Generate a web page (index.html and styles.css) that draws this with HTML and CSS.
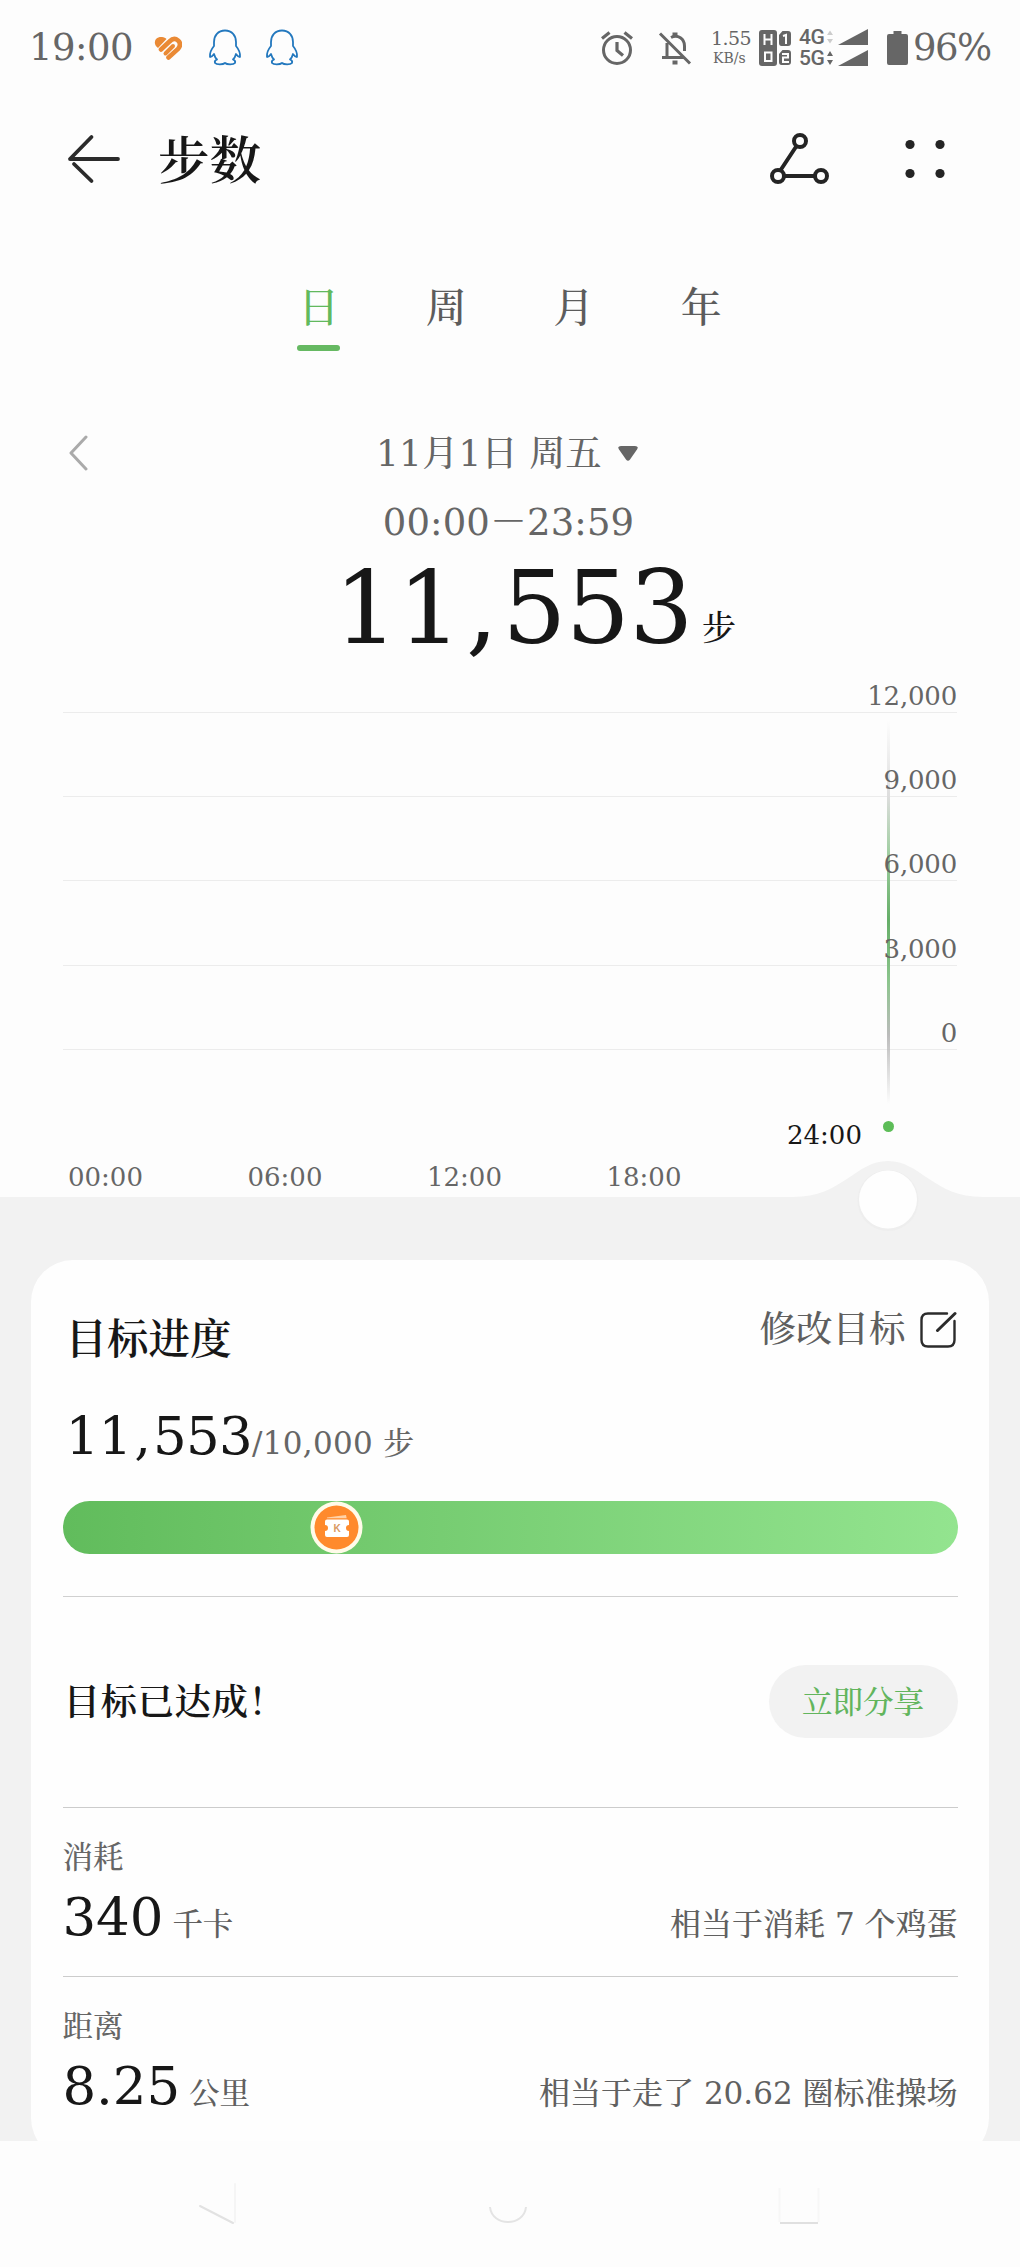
FILE: index.html
```html
<!DOCTYPE html>
<html lang="zh-CN">
<head>
<meta charset="utf-8">
<title>步数</title>
<link rel="stylesheet" href="styles.css">
</head>
<body>
<svg class="defs" width="0" height="0" aria-hidden="true">
  <symbol id="penguin" viewBox="0 0 34 38">
    <path d="M17 1.500C10 1.500 6 6.500 6 13v4C3.500 20 1.500 24 2 28c1.500 0 3-1.500 4-3 .5 2 1.500 4 3 5.500-2 .7-2.500 2-2 3.500 1.500 1.800 8 1.800 10 0 2 1.800 8.500 1.800 10 0 .5-1.500 0-2.800-2-3.500 1.500-1.500 2.500-3.500 3-5.500 1 1.500 2.500 3 4 3 .5-4-1.500-8-4-11v-4c0-6.500-4-11.500-11-11.500z" fill="none" stroke="#2378be" stroke-width="1.800" stroke-linejoin="round"/>
  </symbol>
</svg>
<div class="screen">
  <header class="status">
    <span class="clock">19:00</span>
    <svg class="heart" width="28" height="25" viewBox="0 0 28 25">
      <path d="M1 8C0 3 4 .5 8 1c2 .2 3.500 1 4.500 2L4 12Q1.500 10.500 1 8z" fill="#ea8a35"/>
      <path d="M7 13.500 15.500 5.500Q20 1 24 4.500t0 8.500L14.500 21.500" fill="none" stroke="#ea8a35" stroke-width="4.600" stroke-linecap="round"/>
      <path d="M11.500 17.500 19 10" stroke="#ea8a35" stroke-width="4" stroke-linecap="round"/>
    </svg>
    <svg class="qq" width="34" height="38"><use href="#penguin"/></svg>
    <svg class="qq second" width="34" height="38"><use href="#penguin"/></svg>
    <div class="system">
      <svg width="34" height="36" viewBox="0 0 34 36" fill="none" stroke="#666" stroke-width="3">
        <circle cx="17" cy="20" r="13.500"/><path d="M17 12v8.500l6 5M2 8.500l7.500-6M32 8.500l-7.500-6" stroke-width="3.200"/>
      </svg>
      <svg class="bell" width="34" height="36" viewBox="0 0 34 36" fill="none" stroke="#666" stroke-width="3">
        <path d="M9 13v14M4 27.500h22M13 7.500C20 4 26.500 9 26.500 16v5M2 3.500l30 30"/>
        <path d="M14.500 4.500h5M14.500 32.500h5" stroke-width="4"/>
      </svg>
      <div class="speed"><span class="speed-num">1.55</span><span class="speed-unit">KB/s</span></div>
      <svg class="hd" width="33" height="36" viewBox="0 0 33 36">
        <rect width="18" height="36" rx="3" fill="#666"/>
        <path d="M23.500 1H29q3 0 3 3v9q0 3-3 3h-6.500q-2.500 0-2.500-3V5zM23.500 20H29q3 0 3 3v9q0 3-3 3h-6.500q-2.500 0-2.500-3v-8z" fill="#666"/>
        <path d="M5.500 4v11M12.500 4v11M5.500 9.500h7M6 22.500h6.500v8.500H6zM24 6l3-1v9M23 24h6v3.500h-5V32h6" fill="none" stroke="#fdfdfd" stroke-width="2"/>
      </svg>
      <div class="net"><span>4G</span><span>5G</span></div>
      <svg class="signal" width="44" height="38" viewBox="0 0 44 38">
        <path d="M5 1.500l3 4.500H2zM5 14.500l3-4.500H2z" fill="#ccc"/>
        <path d="M5 22l3 5H2zM5 36l3-5H2z" fill="#666"/>
        <path d="M43 0v16H13zM43 21v16H13z" fill="#666"/>
      </svg>
      <svg class="battery" width="21" height="34" viewBox="0 0 21 34"><path d="M6.500 0h8v3H19q2 0 2 2v27q0 2-2 2H2q-2 0-2-2V5q0-2 2-2h4.500z" fill="#666"/></svg>
      <span class="percent">96%</span>
    </div>
  </header>

  <div class="appbar">
    <svg width="54" height="52" viewBox="0 0 54 52" fill="none" stroke="#2b2b2b" stroke-width="3.800" stroke-linecap="round" stroke-linejoin="round"><path d="M51 26H3L24.500 4M7 31l17.500 17"/></svg>
    <h1>步数</h1>
    <div class="actions">
      <svg width="60" height="52" viewBox="0 0 60 52" fill="none" stroke="#242424" stroke-width="4">
        <path d="M11 38 27.500 13M14 43h32"/><circle cx="31" cy="8" r="6"/><circle cx="9" cy="43" r="6"/><circle cx="52" cy="43" r="6"/>
      </svg>
      <svg width="40" height="40" viewBox="0 0 40 40" fill="#242424"><circle cx="5" cy="5.500" r="4.600"/><circle cx="35" cy="5.500" r="4.600"/><circle cx="5" cy="34.500" r="4.600"/><circle cx="35" cy="34.500" r="4.600"/></svg>
    </div>
  </div>

  <nav class="tabs">
    <a class="tab active">日</a><a class="tab">周</a><a class="tab">月</a><a class="tab">年</a>
  </nav>

  <section class="summary">
    <div class="date-row">
      <svg class="prev" width="20" height="36" viewBox="0 0 20 36" fill="none" stroke="#aaa" stroke-width="3" stroke-linecap="round" stroke-linejoin="round"><path d="M17 2 2 18l15 16"/></svg>
      <span class="date">11月1日 周五</span>
      <svg class="caret" width="20" height="15" viewBox="0 0 20 15"><path d="M3 0h14q4 0 2 3.500l-7 10q-2 2.500-4 0L1 3.500Q-1 0 3 0z" fill="#666"/></svg>
    </div>
    <div class="range">00:00－23:59</div>
    <div class="total"><span class="total-num">11<span class="comma">,</span>553</span><span class="total-unit">步</span></div>
  </section>

  <section class="chart">
    <div class="grid">
      <div class="gridline"><span>12,000</span></div>
      <div class="gridline"><span>9,000</span></div>
      <div class="gridline"><span>6,000</span></div>
      <div class="gridline"><span>3,000</span></div>
      <div class="gridline"><span>0</span></div>
    </div>
    <div class="cursor-line"></div>
    <div class="cursor-dot"></div>
    <div class="cursor-time">24:00</div>
    <div class="hours"><span>00:00</span><span>06:00</span><span>12:00</span><span>18:00</span></div>
    <svg class="slider" width="190" height="82" viewBox="0 0 190 82">
      <path d="M0 37C50 37 62 1 95 1s45 36 95 36v3H0z" fill="#f2f2f2"/>
      <circle cx="95" cy="40.500" r="30.500" fill="#eee"/><circle cx="95" cy="39.500" r="29" fill="#fefefe"/>
    </svg>
  </section>

  <main class="body">
    <section class="card">
      <div class="card-head">
        <h2>目标进度</h2>
        <div class="edit">修改目标
          <svg width="38" height="38" viewBox="0 0 38 38" fill="none" stroke="#2b2b2b" stroke-width="2.400" stroke-linecap="round"><path d="M28 2.500H9Q2.500 2.500 2.500 9v20q0 6.500 6.500 6.500h20q6.500 0 6.500-6.500V10"/><path d="M18.500 19.500 36 2.500" stroke-width="3"/></svg>
        </div>
      </div>
      <div class="goal"><span class="goal-num">11<span class="comma">,</span>553</span><span class="goal-max">/10,000 步</span></div>
      <div class="progress">
        <svg class="coupon" width="53" height="53" viewBox="0 0 53 53">
          <circle cx="26.500" cy="26.500" r="26" fill="#fffbe9"/><circle cx="26.500" cy="26.500" r="22" fill="#ff8a2c"/>
          <path d="M17 16.500 36 14l.7 3.300H17z" fill="#ffd2a8"/>
          <path d="M17 18.500h20q2 0 2 2v3.500a3 3 0 0 0 0 6v4q0 2-2 2H17q-2 0-2-2v-4a3 3 0 0 0 0-6v-3.500q0-2 2-2z" fill="#fff"/>
          <text x="27" y="31" text-anchor="middle" class="coupon-k">K</text>
        </svg>
      </div>
      <div class="achieved"><span>目标已达成！</span><button>立即分享</button></div>
      <div class="metric">
        <div class="label">消耗</div>
        <div class="values"><span class="num">340</span><span class="unit">千卡</span><span class="note">相当于消耗 7 个鸡蛋</span></div>
      </div>
      <div class="metric">
        <div class="label">距离</div>
        <div class="values"><span class="num">8.25</span><span class="unit">公里</span><span class="note">相当于走了 20.62 圈标准操场</span></div>
      </div>
    </section>
  </main>

  <footer class="sysnav">
    <svg width="42" height="48" viewBox="0 0 42 48" fill="none" stroke-linecap="round"><path d="M5 26 38 43" stroke="#e2e2e2" stroke-width="2"/><path d="M40 4v38" stroke="#f5f5f5" stroke-width="2"/></svg>
    <svg width="42" height="48" viewBox="0 0 42 48" fill="none" stroke="#e4e4e4" stroke-width="2"><path d="M3 27c2 20 34 20 36 0"/></svg>
    <svg width="42" height="48" viewBox="0 0 42 48" fill="none"><path d="M1.500 8v34M40.500 8v34" stroke="#f7f7f7" stroke-width="2"/><path d="M2 43h38" stroke="#e0e0e0" stroke-width="2"/></svg>
  </footer>
</div>
</body>
</html>
```
FILE: styles.css
```css
* { box-sizing: border-box; }
body, h1, h2 { margin: 0; }
body {
  background: #fdfdfd;
  color: #171717;
  font-family: "DejaVu Serif", "Noto Serif CJK SC", "Noto Sans CJK SC", serif;
  font-weight: 500;
}
svg { display: block; flex: none; }
.defs { position: absolute; }
.screen { width: 1020px; height: 2267px; overflow: hidden; display: flex; flex-direction: column; }

/* Status bar */
.status { height: 96px; padding: 0 26px 0 29px; display: flex; align-items: center; color: #666; flex: none; }
.clock { font-size: 37px; letter-spacing: -.5px; line-height: 44px; width: 124px; }
.heart { margin-left: 1px; }
.qq { margin-left: 26px; }
.qq.second { margin-left: 23px; }
.system { margin-left: auto; display: flex; align-items: center; }
.bell { margin-left: 24px; }
.speed { width: 42px; margin-left: 19px; display: flex; flex-direction: column; }
.speed-num { font-size: 19px; line-height: 20px; letter-spacing: -.6px; }
.speed-unit { font-size: 14px; line-height: 20px; padding-left: 2px; }
.hd { margin-left: 6px; }
.net { width: 26px; margin-left: 7px; display: flex; flex-direction: column; font-family: Roboto, sans-serif; font-size: 21px; line-height: 21px; letter-spacing: -.5px; }
.signal { width: 44px; }
.battery { margin-left: 18px; }
.percent { font-size: 37px; line-height: 44px; letter-spacing: -1.500px; width: 81px; margin-left: 5px; white-space: nowrap; }

/* App bar */
.appbar { height: 126px; padding: 0 75px 0 67px; display: flex; align-items: center; flex: none; }
.appbar h1 { font-size: 51.500px; font-weight: 600; line-height: 62px; margin-left: 37px; padding-top: 4px; }
.actions { margin-left: auto; display: flex; align-items: center; gap: 76px; }

/* Period tabs */
.tabs { height: 130px; padding-top: 56px; display: flex; justify-content: center; gap: 84px; flex: none; }
.tab { width: 43.500px; height: 74px; font-size: 41px; line-height: 60px; text-align: center; color: #5c5c5c; }
.tab.active { color: #62b95d; position: relative; }
.tab.active::after { content: ""; position: absolute; left: 0; bottom: 1px; width: 43px; height: 6px; border-radius: 3px; background: #66b962; }

/* Day summary */
.summary { height: 330px; padding-top: 71px; color: #666; flex: none; }
.date-row { height: 60px; padding-left: 69px; display: flex; align-items: center; }
.date { margin-left: 287px; width: 223px; font-size: 36px; line-height: 50px; padding-top: 1px; letter-spacing: .2px; white-space: nowrap; }
.caret { margin-left: 19px; }
.range { margin-top: 12px; padding-right: 3px; text-align: center; font-size: 37px; line-height: 56px; letter-spacing: .1px; }
.total { display: flex; align-items: flex-start; color: #171717; padding-left: 334px; }
.total-num { font-size: 101px; line-height: 115px; width: 362px; letter-spacing: -.8px; white-space: nowrap; }
.comma { padding: 0 .05em; }
.total-unit { font-size: 34px; line-height: 154px; margin-left: 6px; }

/* Chart */
.chart { position: relative; height: 515px; padding-top: 30px; flex: none; }
.grid { margin: 0 63px; }
.gridline { height: 84.200px; border-top: 1.500px solid #ececec; display: flex; justify-content: flex-end; }
.gridline span { position: relative; z-index: 1; margin-top: -34px; height: 34px; line-height: 34px; font-size: 26px; letter-spacing: -.2px; color: #666; }
.cursor-line { position: absolute; left: 887px; top: 38px; width: 2.500px; height: 384px; background: linear-gradient(transparent, #ddd 20%, #9fcea0 35%, #65ae68 52%, #8cc58d 68%, #bbb 82%, transparent); }
.cursor-dot { position: absolute; left: 882.500px; top: 439px; width: 11px; height: 11px; border-radius: 50%; background: #5dbd58; }
.cursor-time { position: absolute; left: 787px; top: 436px; font-size: 26px; line-height: 34px; }
.hours { margin: 27.500px 0 0 68px; display: flex; font-size: 26px; line-height: 34px; color: #666; }
.hours span { width: 179.500px; }
.slider { position: absolute; left: 793px; top: 478px; z-index: 1; }

/* Goal card */
.body { height: 944px; padding: 62.500px 31px 0; background: #f2f2f2; overflow: hidden; flex: none; }
.card { height: 900px; border-radius: 42px; background: #fefefe; padding: 48px 31.500px 0; }
.card-head { height: 60px; display: flex; justify-content: space-between; }
.card h2 { font-size: 41.500px; font-weight: 600; line-height: 63px; margin-left: 3px; }
.edit { height: 44px; display: flex; align-items: center; gap: 13px; font-size: 36.500px; line-height: 44px; color: #5f5f5f; margin-right: 1px; }
.goal { height: 70px; display: flex; align-items: baseline; margin: 33px 0 0 3px; line-height: 69px; }
.goal-num { font-size: 53px; letter-spacing: -.7px; }
.goal-max { font-size: 31px; color: #666; letter-spacing: .3px; }
.progress { margin-top: 30px; height: 53px; border-radius: 27px; background: linear-gradient(90deg, #61bc5c, #72c96d 32%, #93e48f); padding-left: 247px; }
.coupon-k { font: bold 10px "Liberation Sans", sans-serif; fill: #d99a62; }
.achieved { margin-top: 42px; height: 211px; border-top: 1.500px solid #d0d0d0; display: flex; align-items: center; justify-content: space-between; font-size: 36.500px; font-weight: 600; }
.achieved span { margin-left: 1px; line-height: 50px; padding-top: 2px; letter-spacing: .5px; }
.achieved button { width: 189px; height: 73px; border: 0; border-radius: 37px; background: #f2f2f2; color: #62b55d; font: 500 30.500px/50px "DejaVu Serif", "Noto Serif CJK SC", "Noto Sans CJK SC", serif; padding: 2px 0 0; }
.metric { height: 169px; border-top: 1.500px solid #ccc; padding-top: 30px; }
.label { font-size: 30.500px; line-height: 40px; color: #666; }
.values { display: flex; align-items: baseline; line-height: 77px; color: #606060; font-size: 31px; }
.num { font-size: 53px; color: #171717; letter-spacing: -.1px; }
.unit { margin-left: 9px; font-size: 30.500px; }
.note { margin-left: auto; }

/* System navigation */
.sysnav { flex: 1; padding: 39px 200px 0 195px; display: flex; justify-content: space-between; }
```
